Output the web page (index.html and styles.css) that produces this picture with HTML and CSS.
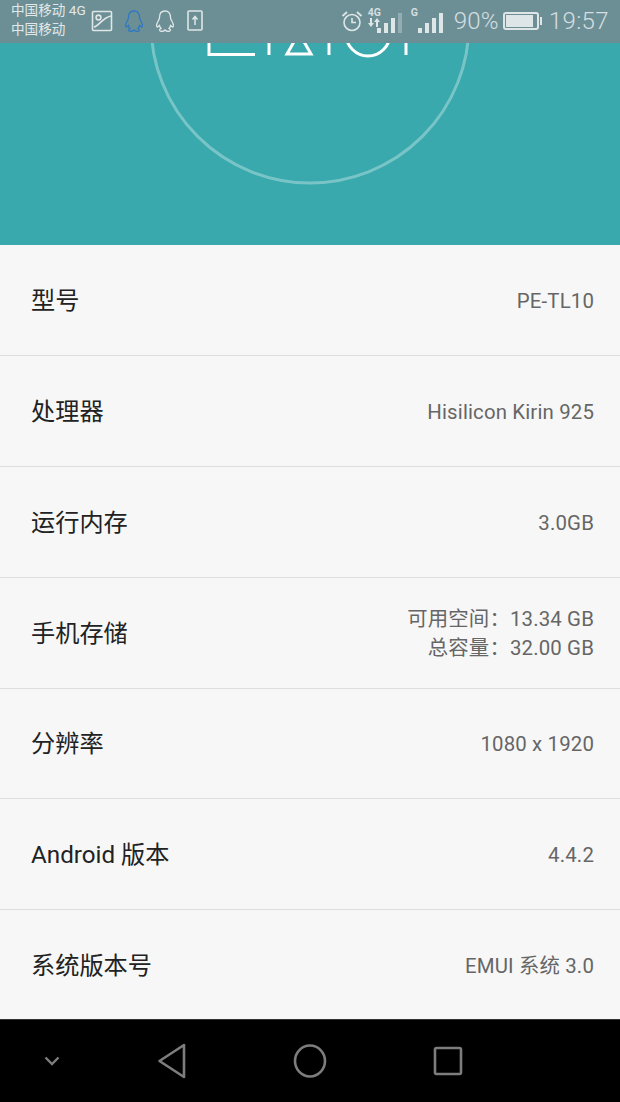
FILE: index.html
```html
<!DOCTYPE html>
<html lang="zh-CN">
<head>
    <meta charset="UTF-8">
    <title>关于手机</title>
    <link rel="stylesheet" href="styles.css">
</head>
<body>
    <div class="phone">
        <!-- Status bar sits over the teal header -->
        <div class="status-bar">
            <div class="carriers">
                <div>中国移动 4G</div>
                <div>中国移动</div>
            </div>
            <svg class="icon-photo" width="22" height="22" viewBox="0 0 22 22" fill="none" stroke="#dfe6e7" stroke-width="1.6">
                <rect x="1.5" y="1.5" width="19" height="19" rx="1"/>
                <circle cx="7.5" cy="7.5" r="2.4"/>
                <path d="M3 17 C8 16 11 8 20 6"/>
            </svg>
            <svg class="icon-qq" width="20" height="24" viewBox="0 0 20 24" fill="none" stroke="#2f78c4" stroke-width="1.3">
                <path d="M10 2 C6 2 4.5 5 4.5 8.5 C4.5 10.5 3 12 2 14.5 C1.3 16.5 1.5 18 2.5 18 L4.5 16.5 C4.8 18 5.5 19 6 19.5 C4.5 20.2 4 21 5 21.8 C6.5 22.5 9 22 10 21 C11 22 13.5 22.5 15 21.8 C16 21 15.5 20.2 14 19.5 C14.5 19 15.2 18 15.5 16.5 L17.5 18 C18.5 18 18.7 16.5 18 14.5 C17 12 15.5 10.5 15.5 8.5 C15.5 5 14 2 10 2 Z"/>
            </svg>
            <svg class="icon-qq" width="20" height="24" viewBox="0 0 20 24" fill="none" stroke="#dfe6e7" stroke-width="1.3">
                <path d="M10 2 C6 2 4.5 5 4.5 8.5 C4.5 10.5 3 12 2 14.5 C1.3 16.5 1.5 18 2.5 18 L4.5 16.5 C4.8 18 5.5 19 6 19.5 C4.5 20.2 4 21 5 21.8 C6.5 22.5 9 22 10 21 C11 22 13.5 22.5 15 21.8 C16 21 15.5 20.2 14 19.5 C14.5 19 15.2 18 15.5 16.5 L17.5 18 C18.5 18 18.7 16.5 18 14.5 C17 12 15.5 10.5 15.5 8.5 C15.5 5 14 2 10 2 Z"/>
            </svg>
            <svg class="icon-upload" width="16" height="21" viewBox="0 0 16 21" fill="none" stroke="#dfe6e7" stroke-width="1.6">
                <rect x="1" y="1" width="14" height="19" rx="1"/>
                <path d="M8 15 V7 M5.5 9.5 L8 6.5 L10.5 9.5" stroke-width="1.5"/>
            </svg>

            <div class="status-right">
                <svg class="icon-alarm" width="22" height="22" viewBox="0 0 22 22" fill="none" stroke="#dfe6e7" stroke-width="1.6">
                    <circle cx="11" cy="12.5" r="8"/>
                    <path d="M11 8 V12.5 H15"/>
                    <path d="M1.5 6 L6 2 M20.5 6 L16 2" stroke-width="1.8"/>
                </svg>
                <div class="signal signal-first">
                    <span class="net-label">4G</span>
                    <svg class="net-arrows" width="12" height="9" viewBox="0 0 12 9" fill="#dfe6e7">
                        <path d="M2 0 H4 V5 H6 L3 9 L0 5 H2 Z"/>
                        <path d="M8 9 H10 V4 H12 L9 0 L6 4 H8 Z"/>
                    </svg>
                    <i class="bar b1"></i><i class="bar b2"></i><i class="bar b3"></i><i class="bar b4 dim"></i>
                </div>
                <div class="signal signal-second">
                    <span class="net-label">G</span>
                    <i class="bar b1"></i><i class="bar b2"></i><i class="bar b3"></i><i class="bar b4"></i>
                </div>
                <span class="percent">90%</span>
                <div class="battery"><div class="battery-level"></div></div>
                <span class="clock">19:57</span>
            </div>
        </div>

        <div class="hero">
            <svg width="620" height="245" viewBox="0 0 620 245" fill="none" stroke="#fff" stroke-width="3">
                <circle cx="310" cy="24" r="159" stroke-opacity="0.32"/>
                <path d="M209 20 V54.5 H255"/>
                <path d="M269 20 V55"/>
                <path d="M299 33 L311 54 H287 Z"/>
                <path d="M329 20 V55"/>
                <circle cx="368" cy="34" r="22"/>
                <path d="M406 20 V55"/>
            </svg>
        </div>

        <ul class="info-list">
            <li class="info-row">
                <span class="info-name">型号</span>
                <span class="info-value">PE-TL10</span>
            </li>
            <li class="info-row">
                <span class="info-name">处理器</span>
                <span class="info-value">Hisilicon Kirin 925</span>
            </li>
            <li class="info-row">
                <span class="info-name">运行内存</span>
                <span class="info-value">3.0GB</span>
            </li>
            <li class="info-row">
                <span class="info-name">手机存储</span>
                <span class="info-value">
                    <div>可用空间：13.34 GB</div>
                    <div>总容量：32.00 GB</div>
                </span>
            </li>
            <li class="info-row">
                <span class="info-name">分辨率</span>
                <span class="info-value">1080 x 1920</span>
            </li>
            <li class="info-row">
                <span class="info-name">Android 版本</span>
                <span class="info-value">4.4.2</span>
            </li>
            <li class="info-row">
                <span class="info-name">系统版本号</span>
                <span class="info-value">EMUI 系统 3.0</span>
            </li>
        </ul>

        <div class="nav-bar">
            <svg class="nav-hide" width="18" height="12" viewBox="0 0 18 12" fill="none" stroke="#7d7d7d" stroke-width="2.4">
                <path d="M2.5 2.5 L9 9 L15.5 2.5"/>
            </svg>
            <svg class="nav-back" width="30" height="36" viewBox="0 0 30 36" fill="none" stroke="#7d7d7d" stroke-width="2.6" stroke-linejoin="round">
                <path d="M27 2 V34 L2.5 18 Z"/>
            </svg>
            <svg class="nav-home" width="34" height="36" viewBox="0 0 34 36" fill="none" stroke="#7d7d7d" stroke-width="2.6">
                <ellipse cx="17" cy="18" rx="15" ry="15.5"/>
            </svg>
            <svg class="nav-recent" width="30" height="30" viewBox="0 0 30 30" fill="none" stroke="#7d7d7d" stroke-width="2.6" stroke-linejoin="round">
                <rect x="2" y="2" width="26" height="26" rx="1.5"/>
            </svg>
        </div>
    </div>
</body>
</html>
```

FILE: styles.css
```css
* {
    box-sizing: border-box;
}

html, body {
    margin: 0;
    height: 100%;
}

body {
    overflow: hidden;
    background: #000;
    font-family: "Roboto", "Noto Sans CJK SC", sans-serif;
}

.phone {
    position: relative;
    display: flex;
    flex-direction: column;
    width: 620px;
    height: 1102px;
}

/* Status bar */
.status-bar {
    position: absolute;
    top: 0;
    left: 0;
    width: 100%;
    height: 43px;
    z-index: 2;
    display: flex;
    align-items: center;
    padding: 0 11px 2px;
    background: #6c8f95;
    color: #e2e8e9;
}

.carriers {
    width: 80px;
    margin-bottom: 2px;
    font-size: 13.6px;
    line-height: 19px;
    white-space: nowrap;
}

.icon-qq {
    margin-left: 11px;
}

.icon-upload {
    margin-left: 12px;
}

.status-right {
    margin-left: auto;
    display: flex;
    align-items: center;
    color: #d5dee0;
}

.icon-alarm {
    margin-right: 5px;
}

.signal {
    position: relative;
    display: flex;
    align-items: flex-end;
    justify-content: flex-end;
    gap: 3px;
    height: 22px;
    width: 34px;
    margin-top: 2px;
}

.signal-first {
    margin-right: 12px;
}

.signal-second {
    margin-right: 11px;
    width: 29px;
}

.net-label {
    position: absolute;
    top: -4px;
    left: 0;
    font-size: 10.5px;
    font-weight: 700;
    line-height: 11px;
}

.signal-second .net-label {
    left: -3px;
}

.net-arrows {
    position: absolute;
    top: 7px;
    left: 0;
}

.bar {
    display: block;
    width: 4px;
    background: #dfe6e7;
}

.b1 { height: 5px; }
.b2 { height: 10px; }
.b3 { height: 15px; }
.b4 { height: 20px; }

.dim {
    opacity: 0.35;
}

.percent {
    font-size: 24px;
    font-weight: 300;
    margin-right: 4px;
    letter-spacing: 0.2px;
}

.battery {
    position: relative;
    width: 36px;
    height: 18px;
    border: 2px solid #dfe6e7;
    border-radius: 3px;
    padding: 1px;
    margin-right: 10px;
}

.battery::after {
    content: '';
    position: absolute;
    right: -5px;
    top: 3px;
    width: 2px;
    height: 8px;
    background: #dfe6e7;
}

.battery-level {
    width: 90%;
    height: 100%;
    background: #dfe6e7;
}

.clock {
    font-size: 24px;
    font-weight: 300;
    letter-spacing: 0.4px;
}

/* Teal header */
.hero {
    height: 245px;
    flex: none;
    background: #39a9ad;
    overflow: hidden;
}

.hero svg {
    display: block;
}

/* Info rows */
.info-list {
    flex: none;
    height: 774px;
    margin: 0;
    padding: 0;
    list-style: none;
    display: flex;
    flex-direction: column;
    background: #f7f7f7;
}

.info-row {
    flex: none;
    height: 110.88px;
    display: flex;
    align-items: center;
    justify-content: space-between;
    padding: 0 26px 0 31px;
    border-bottom: 1px solid #dedede;
}

.info-row:last-child {
    flex: 1;
    height: auto;
    border-bottom: none;
}

.info-name {
    font-size: 24.2px;
    color: #222;
    margin-bottom: 3px;
}

.info-value {
    font-size: 20.4px;
    line-height: 29px;
    letter-spacing: 0.15px;
    color: #666;
    text-align: right;
    margin-top: 3px;
}

/* Bottom navigation */
.nav-bar {
    flex: 1;
    display: flex;
    align-items: center;
    background: #000;
    border-top: 1px solid #333;
    padding-left: 43px;
}

.nav-back {
    margin-left: 96px;
}

.nav-home {
    margin-left: 106px;
}

.nav-recent {
    margin-left: 106px;
}
```
